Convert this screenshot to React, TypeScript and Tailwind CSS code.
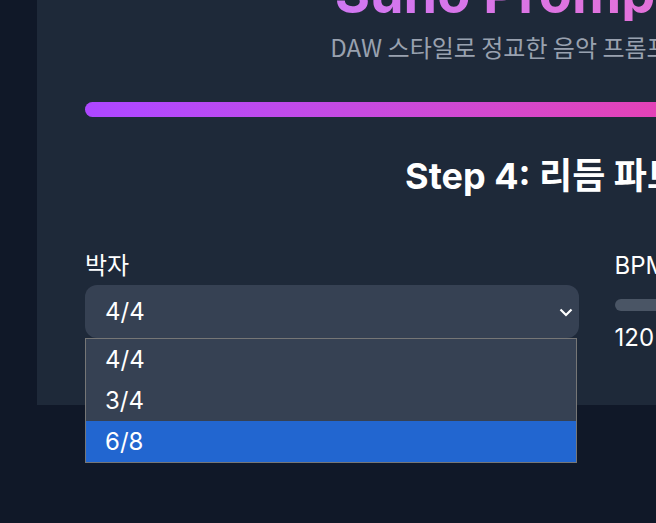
import React, { useState } from 'react'

const meters = ['4/4', '3/4', '6/8']

export default function App() {
    const [meter, setMeter] = useState('4/4')
    const [bpm, setBpm] = useState(120)

    return (
        <main className="h-[523px] overflow-hidden bg-gray-900 font-['Inter','Noto_Sans_CJK_KR',sans-serif] text-white">
            <div className="ml-[37px] -mt-[81px] w-[1119px] bg-gray-800 px-12 pt-12 pb-[51px]">
                {/* Header */}
                <h1 className="bg-gradient-to-r from-purple-400 to-pink-400 bg-clip-text text-center text-[54px] font-bold leading-none text-transparent">
                    Suno Prompt Studio
                </h1>
                <p className="mt-[10px] text-center font-['Noto_Sans_CJK_KR',sans-serif] text-[24px] leading-8 text-gray-400">
                    DAW 스타일로 정교한 음악 프롬프트를 만들어 보세요.
                </p>

                {/* Progress */}
                <div className="mt-[39px] h-[15px] w-full rounded-full bg-gray-700">
                    <div className="h-full w-3/4 rounded-full bg-gradient-to-r from-purple-500 to-pink-500" />
                </div>

                <h2 className="mt-[39px] text-center text-[36px] font-bold leading-10 text-white">
                    Step 4: 리듬 파트 만들기
                </h2>

                <div className="mt-[54px] grid grid-cols-2 gap-9">
                    <div>
                        <label className="mb-[3px] block text-[24px] leading-8">박자</label>
                        <div className="relative h-[53px]">
                            <select
                                value={meter}
                                onChange={(e) => setMeter(e.target.value)}
                                className="h-full w-full appearance-none rounded-xl bg-gray-700 px-5 text-[24px] text-white outline-none"
                            >
                                {meters.map((m) => (
                                    <option key={m} value={m}>{m}</option>
                                ))}
                            </select>
                            <svg
                                className="pointer-events-none absolute right-[6px] top-[23px]"
                                width="14"
                                height="9"
                                viewBox="0 0 14 9"
                                fill="none"
                            >
                                <path d="M1.5 1.5 L7 7 L12.5 1.5" stroke="white" strokeWidth="2.2" />
                            </svg>

                            {/* open option list */}
                            <ul className="absolute left-0 top-full z-10 w-[492px] border border-[#767676] bg-gray-700">
                                {meters.map((m) => (
                                    <li
                                        key={m}
                                        className={`flex h-[41px] items-center pl-[19px] text-[24px] text-white ${m === '6/8' ? 'bg-[#2266d0]' : ''}`}
                                    >
                                        {m}
                                    </li>
                                ))}
                            </ul>
                        </div>
                    </div>

                    <div>
                        <label className="block text-[24px] leading-8">BPM</label>
                        <input
                            type="range"
                            min={60}
                            max={200}
                            value={bpm}
                            onChange={(e) => setBpm(Number(e.target.value))}
                            className="mt-[17px] block h-3 w-full appearance-none rounded-lg bg-gray-600"
                        />
                        <div className="mt-[11px] text-[24px] leading-8">{bpm}</div>
                    </div>
                </div>
            </div>
        </main>
    )
}
